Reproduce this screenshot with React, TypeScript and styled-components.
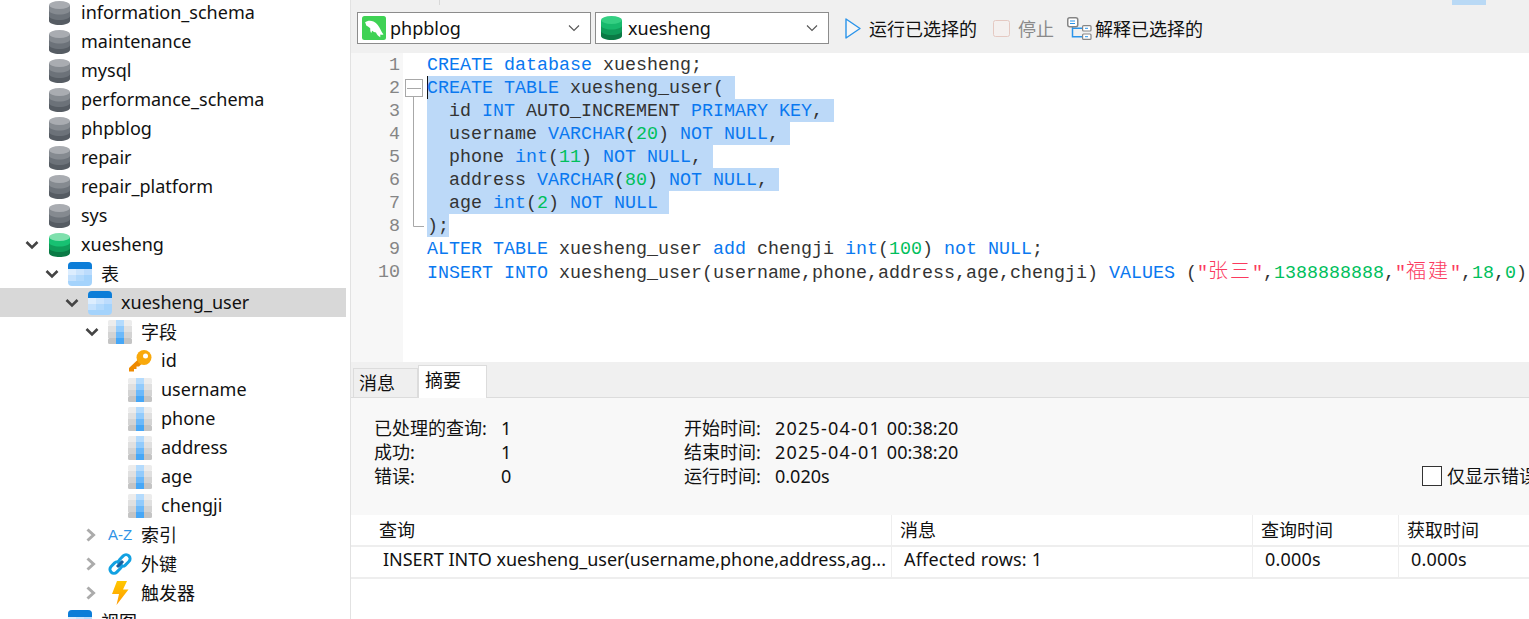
import React from "react";
import styled, { createGlobalStyle } from "styled-components";

const uiFont = `"Noto Sans", "Noto Sans CJK SC", sans-serif`;
const codeFont = `"Liberation Mono", "Noto Sans CJK SC", monospace`;

const GlobalStyle = createGlobalStyle`
    html, body {
        margin: 0;
        height: 100%;
        overflow: hidden;
        background: #ffffff;
    }
`;

const Page = styled.div`
    display: flex;
    width: 1529px;
    height: 619px;
    overflow: hidden;
    font-family: ${uiFont};
    font-size: 18px;
    color: #111111;
`;

const Sidebar = styled.aside`
    flex: none;
    box-sizing: border-box;
    width: 351px;
    height: 619px;
    padding-right: 4px;
    border-right: 1px solid #e2e2e2;
    overflow: hidden;
`;

const Tree = styled.ul`
    list-style: none;
    margin: -2px 0 0;
    padding: 0;
`;

const TreeRow = styled.li<{ $level: number; $active?: boolean }>`
    display: flex;
    align-items: center;
    height: 29px;
    padding-left: ${(p) => 25 + p.$level * 20}px;
    background: ${(p) => (p.$active ? "#d8d8d8" : "transparent")};
    white-space: nowrap;
`;

const ChevronSlot = styled.span`
    flex: none;
    display: flex;
    width: 24px;
`;

const IconSlot = styled.span`
    flex: none;
    display: flex;
    justify-content: center;
    width: 24px;
    margin-right: 9px;
    margin-left: -1px;
`;

const TreeLabel = styled.span`
    padding-bottom: 2px;
`;

const AzLabel = styled.span`
    font-family: "Liberation Sans", sans-serif;
    font-size: 15px;
    line-height: 24px;
    color: #2f93e6;
`;

const CylinderSvg = styled.svg`
    flex: none;
    margin-right: 1px;
`;

const Main = styled.main`
    flex: 1;
    min-width: 0;
    display: flex;
    flex-direction: column;
`;

const Toolbar = styled.div`
    position: relative;
    flex: none;
    display: flex;
    align-items: flex-start;
    box-sizing: border-box;
    height: 53px;
    padding: 12px 0 0 6px;
    background: #f0f0f0;
`;

const TopMark = styled.span<{ $left: number; $w: number; $color: string }>`
    position: absolute;
    top: 0;
    left: ${(p) => p.$left}px;
    width: ${(p) => p.$w}px;
    height: 5px;
    background: ${(p) => p.$color};
`;

const Select = styled.div<{ $pad: number; $gap: number }>`
    flex: none;
    display: flex;
    align-items: center;
    box-sizing: border-box;
    width: 234px;
    height: 32px;
    margin-right: 4px;
    padding: 0 10px 0 ${(p) => p.$pad}px;
    gap: ${(p) => p.$gap}px;
    background: #ffffff;
    border: 1px solid #8c8c8c;
`;

const SelectLabel = styled.span`
    flex: 1;
`;

const ToolButton = styled.div<{ $gap: number; $ml: number; $muted?: boolean }>`
    flex: none;
    display: flex;
    align-items: center;
    height: 32px;
    gap: ${(p) => p.$gap}px;
    margin-left: ${(p) => p.$ml}px;
    color: ${(p) => (p.$muted ? "#8a8a8a" : "#111111")};
`;

const Editor = styled.div`
    flex: none;
    display: flex;
    height: 309px;
    background: #ffffff;
`;

const Gutter = styled.div`
    flex: none;
    box-sizing: border-box;
    width: 52px;
    padding-right: 3px;
    background: #f7f7f7;
    font-family: ${codeFont};
    font-size: 18.33px;
    text-align: right;
    color: #858585;
`;

const GutterLine = styled.div`
    height: 23px;
    line-height: 25px;
`;

const FoldMargin = styled.div`
    flex: none;
    width: 24px;
`;

const Code = styled.div`
    flex: 1;
    min-width: 0;
    font-family: ${codeFont};
    font-size: 18.33px;
    white-space: pre;
    color: #333333;
`;

const CodeLine = styled.div`
    height: 23px;
    line-height: 25px;
`;

const Selected = styled.span<{ $caret?: boolean }>`
    display: inline-block;
    vertical-align: top;
    height: 23px;
    background: #bcd9f8;
    box-shadow: ${(p) => (p.$caret ? "inset 1px 0 0 #111111" : "none")};
`;

const Tok = styled.span<{ $kind: TokenKind }>`
    color: ${(p) =>
        p.$kind === "kw" ? "#0a78f0" : p.$kind === "num" ? "#00c05c" : p.$kind === "str" ? "#fb3a5e" : "#333333"};
`;

const Han = styled.span`
    font-size: 20px;
    letter-spacing: 2px;
    font-weight: 300;
`;

const TabStrip = styled.div`
    flex: none;
    display: flex;
    align-items: flex-end;
    box-sizing: border-box;
    height: 36px;
    padding-left: 2px;
    background: #f0f0f0;
    border-bottom: 1px solid #dcdcdc;
`;

const Tab = styled.div<{ $active?: boolean }>`
    box-sizing: border-box;
    height: ${(p) => (p.$active ? 33 : 29)}px;
    width: ${(p) => (p.$active ? 69 : 65)}px;
    margin-bottom: ${(p) => (p.$active ? -1 : 0)}px;
    padding-left: ${(p) => (p.$active ? 6 : 5)}px;
    line-height: ${(p) => (p.$active ? 28 : 29)}px;
    background: ${(p) => (p.$active ? "#ffffff" : "#efefef")};
    border: 1px solid #dcdcdc;
    border-bottom: none;
`;

const Summary = styled.section`
    flex: none;
    display: flex;
    box-sizing: border-box;
    height: 117px;
    padding: 18px 0 0 23px;
    background: #f8f8f8;
    line-height: 24px;
`;

const SummaryCol = styled.div<{ $width: number; $labelWidth: number }>`
    flex: none;
    display: grid;
    grid-template-columns: ${(p) => p.$labelWidth}px 1fr;
    grid-auto-rows: 24px;
    width: ${(p) => p.$width}px;
`;

const DatePart = styled.span`
    letter-spacing: 1.2px;
`;

const ErrorsOnly = styled.label`
    flex: none;
    display: flex;
    align-items: center;
    gap: 5px;
    height: 24px;
    margin-top: 48px;
    white-space: nowrap;
`;

const CheckBox = styled.span`
    flex: none;
    box-sizing: border-box;
    width: 20px;
    height: 20px;
    background: #ffffff;
    border: 1px solid #333333;
`;

const Grid = styled.div`
    flex: none;
    display: grid;
    grid-template-columns: 540px 361px 146px 1fr;
`;

const HeadCell = styled.div<{ $pad: number; $first?: boolean }>`
    box-sizing: border-box;
    height: 32px;
    padding-left: ${(p) => p.$pad}px;
    line-height: 31px;
    border-bottom: 2px solid #eeeeee;
    border-left: ${(p) => (p.$first ? "none" : "1px solid #eeeeee")};
`;

const BodyCell = styled.div<{ $pad: number; $first?: boolean }>`
    box-sizing: border-box;
    height: 32px;
    padding-left: ${(p) => p.$pad}px;
    line-height: 24px;
    letter-spacing: ${(p) => (p.$first ? "-0.02px" : "0.18px")};
    white-space: nowrap;
    overflow: hidden;
    border-bottom: 2px solid #eeeeee;
    border-left: ${(p) => (p.$first ? "none" : "1px solid #eeeeee")};
`;

/* ---- drawings ---- */

const ChevronDown = () => (
    <svg width="14" height="10" viewBox="0 0 14 10">
        <path d="M1.5 2 7 7.500 12.500 2" fill="none" stroke="#444444" strokeWidth="2.600" />
    </svg>
);

const ChevronRight = () => (
    <svg width="14" height="14" viewBox="0 0 14 14">
        <path d="M2.500 1.500 8.500 7 2.500 12.500" fill="none" stroke="#ababab" strokeWidth="3" />
    </svg>
);

const SelectCaret = () => (
    <svg width="12" height="8" viewBox="0 0 12 8">
        <path d="M1 1.500 6 6.500 11 1.500" fill="none" stroke="#555555" strokeWidth="1.100" />
    </svg>
);

const Cylinder = ({ colors }: { colors: string[] }) => (
    <CylinderSvg width="21" height="24" viewBox="0 0 21 24">
        <path d="M0 4v16c0 2.200 4.700 4 10.500 4S21 22.200 21 20V4z" fill={colors[3]} />
        <path d="M0 4v11c0 2.200 4.700 4 10.500 4S21 17.200 21 15V4z" fill={colors[2]} />
        <path d="M0 4v5.500c0 2.200 4.700 4 10.500 4S21 11.700 21 9.500V4z" fill={colors[1]} />
        <ellipse cx="10.500" cy="4" rx="10.500" ry="4" fill={colors[0]} />
    </CylinderSvg>
);

const grayDb = ["#a9acb1", "#858a90", "#6c7279", "#565c63"];
const greenDb = ["#7fe0ad", "#17c172", "#0f9c59", "#0a7a45"];

const TableIcon = () => (
    <svg width="24" height="24" viewBox="0 0 24 24">
        <rect width="24" height="24" rx="4" fill="#a4d3fc" />
        <rect y="7" width="8" height="6" fill="#dcedfe" />
        <rect x="8" y="7" width="8" height="6" fill="#cbe4fd" />
        <rect x="16" y="7" width="8" height="6" fill="#bcdcfd" />
        <rect y="13" width="8" height="6" fill="#c4e1fd" />
        <rect x="8" y="13" width="8" height="6" fill="#b2d9fc" />
        <path d="M0 7V4a4 4 0 0 1 4-4h16a4 4 0 0 1 4 4v3z" fill="#0c7dd8" />
    </svg>
);

const fieldSide = ["#ececec", "#e0e0e0", "#d3d3d3", "#c4c4c4"];
const fieldMid = ["#b4dbfd", "#92cbfc", "#6cb9fa", "#46a7f7"];

const FieldIcon = () => (
    <svg width="24" height="24" viewBox="0 0 24 24">
        {fieldSide.map((c, i) => (
            <rect key={i} y={i * 6} width="24" height="6" rx={i === 0 || i === 3 ? 1.500 : 0} fill={c} />
        ))}
        {fieldMid.map((c, i) => (
            <rect key={i} x="8" y={i * 6} width="8" height="6" fill={c} />
        ))}
    </svg>
);

const KeyIcon = () => (
    <svg width="24" height="22" viewBox="0 0 24 22">
        <path d="M10 9.500 1 18v3.500h5V19h2.500v-2.500H11l2.500-2.500z" fill="#ee8a00" />
        <circle cx="16" cy="7.500" r="7.500" fill="#f9a90c" />
        <circle cx="17.500" cy="6" r="2.500" fill="#ffffff" />
    </svg>
);

const LinkIcon = () => (
    <svg width="24" height="24" viewBox="0 0 24 24">
        <rect x="1.200" y="11.500" width="13" height="8" rx="4" transform="rotate(-45 7.700 15.500)" fill="none" stroke="#12a1e2" strokeWidth="3" />
        <rect x="9.800" y="4.500" width="13" height="8" rx="4" transform="rotate(-45 16.300 8.500)" fill="none" stroke="#12a1e2" strokeWidth="3" />
        <path d="M9 15 15 9" stroke="#1a5f9e" strokeWidth="3" />
    </svg>
);

const BoltIcon = () => (
    <svg width="18" height="24" viewBox="0 0 18 24">
        <defs>
            <linearGradient id="bolt" x1="0" y1="0" x2="0" y2="1">
                <stop offset="0" stopColor="#ffc800" />
                <stop offset="1" stopColor="#ff9a00" />
            </linearGradient>
        </defs>
        <path d="M6 0h10l-4 8.500h5.500L5.500 24 8 13H1z" fill="url(#bolt)" />
    </svg>
);

const DolphinIcon = () => (
    <svg width="24" height="24" viewBox="0 0 24 24">
        <rect width="24" height="24" rx="2.500" fill="#3fd254" />
        <path
            d="M3 6.500C5 4.500 8.500 4 11.500 5.500c3.500 1.800 5.500 5 7 8 .8 1.700 1.700 3.500 3 4.800-1 .7-2.300.6-3.300.2.200 1 .2 1.800 0 2.700-2-1-3.400-2.700-4.200-4.700-1.500-.2-2.800-.8-3.800-1.800l-1 2.300c-.9-1.500-1.100-3.100-.9-4.600-1.200-1.300-2.800-2-4.300-3.100.1-.4-.2-1.800-1-2.800z"
            fill="#ffffff"
        />
    </svg>
);

const RunIcon = () => (
    <svg width="16" height="21" viewBox="0 0 16 21">
        <path d="M1 1v19l14-9.500z" fill="#ffffff" fillOpacity="0.4" stroke="#2a94ea" strokeWidth="1.400" strokeLinejoin="round" />
    </svg>
);

const StopIcon = () => (
    <svg width="17" height="17" viewBox="0 0 17 17">
        <rect x="0.500" y="0.500" width="16" height="16" rx="2" fill="#f4f0ef" stroke="#e5c9c2" />
    </svg>
);

const ExplainIcon = () => (
    <svg width="25" height="24" viewBox="0 0 25 24" fill="none">
        <path d="M5.500 11V20.700H15M5.500 12.300H15" stroke="#2a94ea" strokeWidth="1.500" />
        <rect x="0.750" y="1.750" width="10" height="9" rx="2" stroke="#858585" strokeWidth="1.500" fill="#ffffff" />
        <path d="M3 5h5M3 7.500h5" stroke="#2a94ea" />
        <rect x="15.600" y="9.600" width="8.400" height="5.400" rx="1" stroke="#858585" strokeWidth="1.200" fill="#ffffff" />
        <rect x="15.600" y="18" width="8.400" height="5.400" rx="1" stroke="#858585" strokeWidth="1.200" fill="#ffffff" />
        <path d="M18 12.300h3M18 20.700h3" stroke="#2a94ea" />
    </svg>
);

const FoldMarks = () => (
    <svg width="24" height="184" viewBox="0 0 24 184">
        <path d="M10.500 41V173.500H21" fill="none" stroke="#a8a8a8" />
        <rect x="2.500" y="26.500" width="17" height="17" fill="#ffffff" stroke="#a8a8a8" />
        <path d="M4 35.500H18" stroke="#a8a8a8" />
    </svg>
);

/* ---- data ---- */

type Expand = "open" | "closed" | "none";
type TreeItem = { label: string; level: number; icon: React.ReactNode; expand: Expand; active?: boolean };

const grayNames = ["information_schema", "maintenance", "mysql", "performance_schema", "phpblog", "repair", "repair_platform", "sys"];
const fieldNames = ["username", "phone", "address", "age", "chengji"];

const treeItems: TreeItem[] = [
    ...grayNames.map((label): TreeItem => ({ label, level: 0, icon: <Cylinder colors={grayDb} />, expand: "none" })),
    { label: "xuesheng", level: 0, icon: <Cylinder colors={greenDb} />, expand: "open" },
    { label: "表", level: 1, icon: <TableIcon />, expand: "open" },
    { label: "xuesheng_user", level: 2, icon: <TableIcon />, expand: "open", active: true },
    { label: "字段", level: 3, icon: <FieldIcon />, expand: "open" },
    { label: "id", level: 4, icon: <KeyIcon />, expand: "none" },
    ...fieldNames.map((label): TreeItem => ({ label, level: 4, icon: <FieldIcon />, expand: "none" })),
    { label: "索引", level: 3, icon: <AzLabel>A-Z</AzLabel>, expand: "closed" },
    { label: "外键", level: 3, icon: <LinkIcon />, expand: "closed" },
    { label: "触发器", level: 3, icon: <BoltIcon />, expand: "closed" },
    { label: "视图", level: 1, icon: <TableIcon />, expand: "none" },
];

type TokenKind = "kw" | "txt" | "num" | "str";
type Token = [TokenKind, string];

const codeLines: { tokens: Token[]; selected?: boolean; tail?: boolean; caret?: boolean }[] = [
    { tokens: [["kw", "CREATE database"], ["txt", " xuesheng;"]] },
    { tokens: [["kw", "CREATE TABLE"], ["txt", " xuesheng_user("]], selected: true, tail: true, caret: true },
    { tokens: [["txt", "  id "], ["kw", "INT"], ["txt", " AUTO_INCREMENT "], ["kw", "PRIMARY KEY"], ["txt", ","]], selected: true, tail: true },
    { tokens: [["txt", "  username "], ["kw", "VARCHAR"], ["txt", "("], ["num", "20"], ["txt", ") "], ["kw", "NOT NULL"], ["txt", ","]], selected: true, tail: true },
    { tokens: [["txt", "  phone "], ["kw", "int"], ["txt", "("], ["num", "11"], ["txt", ") "], ["kw", "NOT NULL"], ["txt", ","]], selected: true, tail: true },
    { tokens: [["txt", "  address "], ["kw", "VARCHAR"], ["txt", "("], ["num", "80"], ["txt", ") "], ["kw", "NOT NULL"], ["txt", ","]], selected: true, tail: true },
    { tokens: [["txt", "  age "], ["kw", "int"], ["txt", "("], ["num", "2"], ["txt", ") "], ["kw", "NOT NULL"]], selected: true, tail: true },
    { tokens: [["txt", ");"]], selected: true },
    { tokens: [["kw", "ALTER TABLE"], ["txt", " xuesheng_user "], ["kw", "add"], ["txt", " chengji "], ["kw", "int"], ["txt", "("], ["num", "100"], ["txt", ") "], ["kw", "not NULL"], ["txt", ";"]] },
    {
        tokens: [
            ["kw", "INSERT INTO"],
            ["txt", " xuesheng_user(username,phone,address,age,chengji) "],
            ["kw", "VALUES"],
            ["txt", " ("],
            ["str", '"张三"'],
            ["txt", ","],
            ["num", "1388888888"],
            ["txt", ","],
            ["str", '"福建"'],
            ["txt", ","],
            ["num", "18"],
            ["txt", ","],
            ["num", "0"],
            ["txt", ")"],
        ],
    },
];

const renderToken = ([kind, text]: Token, i: number) => {
    const parts = text.split(/([\u4e00-\u9fff]+)/);
    return (
        <Tok key={i} $kind={kind}>
            {parts.map((part, j) => (j % 2 === 1 ? <Han key={j}>{part}</Han> : part))}
        </Tok>
    );
};

const leftSummary = [
    ["已处理的查询:", "1"],
    ["成功:", "1"],
    ["错误:", "0"],
];
const rightSummary: [string, React.ReactNode][] = [
    ["开始时间:", <><DatePart>2025-04-01 </DatePart>00:38:20</>],
    ["结束时间:", <><DatePart>2025-04-01 </DatePart>00:38:20</>],
    ["运行时间:", "0.020s"],
];

const App = () => (
    <Page>
        <GlobalStyle />
        <Sidebar>
            <Tree>
                {treeItems.map((item) => (
                    <TreeRow key={item.label + item.level} $level={item.level} $active={item.active}>
                        <ChevronSlot>
                            {item.expand === "open" && <ChevronDown />}
                            {item.expand === "closed" && <ChevronRight />}
                        </ChevronSlot>
                        <IconSlot>{item.icon}</IconSlot>
                        <TreeLabel>{item.label}</TreeLabel>
                    </TreeRow>
                ))}
            </Tree>
        </Sidebar>
        <Main>
            <Toolbar>
                <TopMark $left={88} $w={1} $color="#d8d8d8" />
                <TopMark $left={1101} $w={34} $color="#b9d9f5" />
                <Select $pad={4} $gap={4}>
                    <DolphinIcon />
                    <SelectLabel>phpblog</SelectLabel>
                    <SelectCaret />
                </Select>
                <Select $pad={5} $gap={5}>
                    <Cylinder colors={["#34cf82", "#17b96c", "#0f9c59", "#0a7a45"]} />
                    <SelectLabel>xuesheng</SelectLabel>
                    <SelectCaret />
                </Select>
                <ToolButton $gap={8} $ml={12}>
                    <RunIcon />
                    运行已选择的
                </ToolButton>
                <ToolButton $gap={8} $ml={16} $muted>
                    <StopIcon />
                    停止
                </ToolButton>
                <ToolButton $gap={3} $ml={13}>
                    <ExplainIcon />
                    解释已选择的
                </ToolButton>
            </Toolbar>
            <Editor>
                <Gutter>
                    {codeLines.map((_, i) => (
                        <GutterLine key={i}>{i + 1}</GutterLine>
                    ))}
                </Gutter>
                <FoldMargin>
                    <FoldMarks />
                </FoldMargin>
                <Code>
                    {codeLines.map((line, i) => (
                        <CodeLine key={i}>
                            {line.selected ? (
                                <Selected $caret={line.caret}>
                                    {line.tokens.map(renderToken)}
                                    {line.tail ? " " : ""}
                                </Selected>
                            ) : (
                                line.tokens.map(renderToken)
                            )}
                        </CodeLine>
                    ))}
                </Code>
            </Editor>
            <TabStrip>
                <Tab>消息</Tab>
                <Tab $active>摘要</Tab>
            </TabStrip>
            <Summary>
                <SummaryCol $width={310} $labelWidth={127}>
                    {leftSummary.map(([label, value]) => (
                        <React.Fragment key={label}>
                            <span>{label}</span>
                            <span>{value}</span>
                        </React.Fragment>
                    ))}
                </SummaryCol>
                <SummaryCol $width={738} $labelWidth={91}>
                    {rightSummary.map(([label, value]) => (
                        <React.Fragment key={label}>
                            <span>{label}</span>
                            <span>{value}</span>
                        </React.Fragment>
                    ))}
                </SummaryCol>
                <ErrorsOnly>
                    <CheckBox />
                    仅显示错误
                </ErrorsOnly>
            </Summary>
            <Grid>
                <HeadCell $first $pad={28}>查询</HeadCell>
                <HeadCell $pad={8}>消息</HeadCell>
                <HeadCell $pad={8}>查询时间</HeadCell>
                <HeadCell $pad={8}>获取时间</HeadCell>
                <BodyCell $first $pad={32}>INSERT INTO xuesheng_user(username,phone,address,ag...</BodyCell>
                <BodyCell $pad={12}>Affected rows: 1</BodyCell>
                <BodyCell $pad={12}>0.000s</BodyCell>
                <BodyCell $pad={12}>0.000s</BodyCell>
            </Grid>
        </Main>
    </Page>
);

export default App;
